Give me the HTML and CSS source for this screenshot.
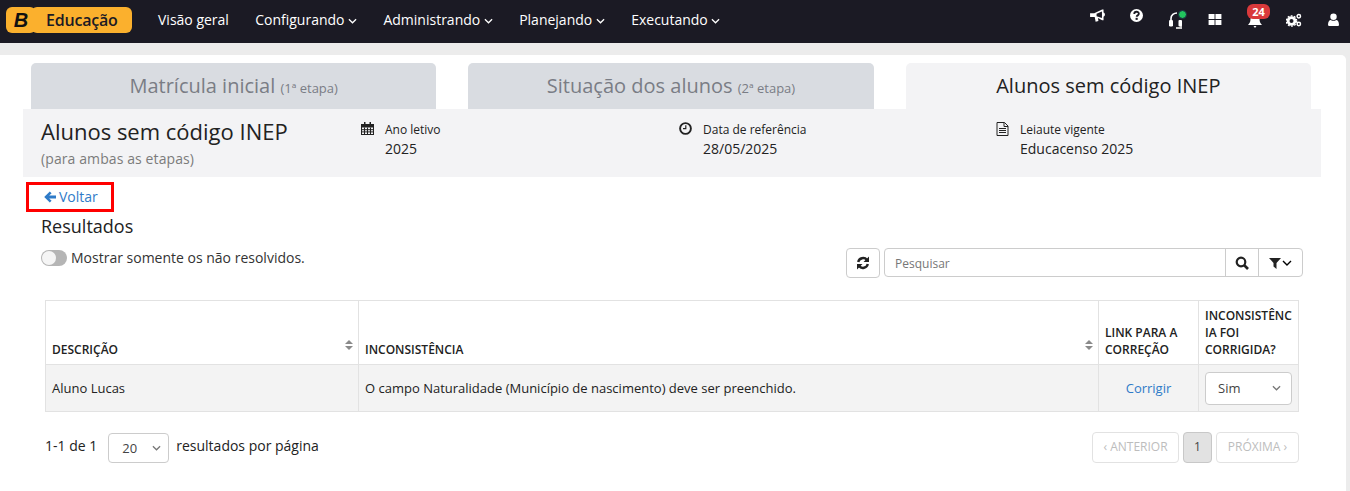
FILE: index.html
```html
<!DOCTYPE html>
<html lang="pt-BR">
<head>
    <meta charset="utf-8">
    <title>Alunos sem código INEP</title>
    <link rel="stylesheet" href="styles.css">
</head>
<body>
    <nav class="topbar">
        <div class="brand"><span class="brand-b">B</span><span class="brand-name">Educação</span></div>
        <ul class="menu">
            <li>Visão geral</li>
            <li>Configurando <svg class="caret" viewBox="0 0 10 6"><path d="M1 1l4 4 4-4"/></svg></li>
            <li>Administrando <svg class="caret" viewBox="0 0 10 6"><path d="M1 1l4 4 4-4"/></svg></li>
            <li>Planejando <svg class="caret" viewBox="0 0 10 6"><path d="M1 1l4 4 4-4"/></svg></li>
            <li>Executando <svg class="caret" viewBox="0 0 10 6"><path d="M1 1l4 4 4-4"/></svg></li>
        </ul>
        <div class="tools">
            <span class="tool tool-news"><svg viewBox="0 0 16 14" width="15" height="13"><path fill="#fff" d="M0 4.500h4.500L13 .5h1.500v3.200c.9.300 1.500 1.100 1.500 2.300s-.6 2-1.500 2.300V12H13L8.500 9.800 9 13l-3 .8-1-5.300H0z"/><path fill="#1b1a24" d="M12.800 2.700v7L7 7.800V5z"/></svg></span>
            <span class="tool tool-question"><svg viewBox="0 0 14 14" width="13" height="13"><circle cx="7" cy="7" r="7" fill="#fff"/><path d="M4.600 5.400c0-3.200 4.900-3.200 4.900-.3 0 1.800-2.300 1.700-2.300 3.300" fill="none" stroke="#1b1a24" stroke-width="2"/><rect x="6" y="9.500" width="2.300" height="2.200" fill="#1b1a24"/></svg></span>
            <span class="tool tool-help"><svg viewBox="0 0 15 17" width="15" height="17"><path d="M2 9V6.500C2 3 5 1 8 1" fill="none" stroke="#fff" stroke-width="1.600"/><rect x="0" y="8" width="4" height="6.500" rx="1.200" fill="#fff"/><rect x="9.500" y="8" width="3.500" height="6.500" rx="1" fill="#fff"/><path d="M12 14v2H7" fill="none" stroke="#ccc" stroke-width="2"/></svg><span class="online"></span></span>
            <span class="tool tool-grid"><svg viewBox="0 0 14 12" width="14" height="11"><path fill="#fff" d="M0 0h6.500v5.500H0zM7.500 0H14v5.500H7.500zM0 6.500h6.500V12H0zM7.500 6.500H14V12H7.500z"/></svg></span>
            <span class="tool tool-bell"><svg viewBox="0 0 14 14" width="14" height="14"><path fill="#fff" d="M7 0c3 0 4.500 2 4.500 5 0 3 1 4.500 2.500 6H0c1.500-1.500 2.500-3 2.500-6C2.500 2 4 0 7 0zM5.500 12h3L7 14z"/></svg><span class="badge">24</span></span>
            <span class="tool tool-cogs"><svg viewBox="0 0 16 14" width="16" height="14"><circle cx="5.500" cy="8" r="3.400" fill="none" stroke="#fff" stroke-width="2.800"/><circle cx="5.500" cy="8" r="5.200" fill="none" stroke="#fff" stroke-width="1.300" stroke-dasharray="1.800 1.500"/><circle cx="12.800" cy="3.300" r="1.700" fill="none" stroke="#fff" stroke-width="1.500"/><circle cx="12.800" cy="11" r="1.700" fill="none" stroke="#fff" stroke-width="1.500"/></svg></span>
            <span class="tool tool-user"><svg viewBox="0 0 12 14" width="11" height="13"><circle cx="6" cy="4" r="3.500" fill="#fff"/><path fill="#fff" d="M0 13c0-4 1.500-5.500 3-5.500 1.800 1.300 4.200 1.300 6 0 1.500 0 3 1.500 3 5.500 0 .6-.5 1-1 1H1c-.5 0-1-.4-1-1z"/></svg></span>
        </div>
    </nav>

    <main class="page">
        <div class="tabs">
            <div class="tab">Matrícula inicial <small>(1ª etapa)</small></div>
            <div class="tab">Situação dos alunos <small>(2ª etapa)</small></div>
            <div class="tab tab-active">Alunos sem código INEP</div>
        </div>

        <section class="summary">
            <div class="summary-title">
                <h1>Alunos sem código INEP</h1>
                <p>(para ambas as etapas)</p>
            </div>
            <div class="info">
                <svg class="info-icon" viewBox="0 0 13 13" width="13" height="13"><path fill="#222" d="M0 2h3V0h1.500v2h4V0H10v2h3v11H0zm1 3.500V12h11V5.500z"/><path stroke="#222" d="M3.500 5.500V12M6.500 5.500V12M9.500 5.500V12M1 7.700h11M1 9.900h11"/></svg>
                <div><span class="info-label">Ano letivo</span><span class="info-value">2025</span></div>
            </div>
            <div class="info">
                <svg class="info-icon" viewBox="0 0 13 13" width="13" height="13"><circle cx="6.500" cy="6.500" r="5.400" fill="none" stroke="#222" stroke-width="1.900"/><path d="M6.800 3.200v3.500H4" fill="none" stroke="#222" stroke-width="1.200"/></svg>
                <div><span class="info-label">Data de referência</span><span class="info-value">28/05/2025</span></div>
            </div>
            <div class="info">
                <svg class="info-icon" viewBox="0 0 13 14" width="13" height="14"><path fill="none" stroke="#222" d="M1 .5h7.500L12 4v9.500H1zM8 .5V4.500h4"/><path stroke="#222" d="M3 6.500h7M3 8.500h7M3 10.500h7"/></svg>
                <div><span class="info-label">Leiaute vigente</span><span class="info-value">Educacenso 2025</span></div>
            </div>
        </section>

        <a class="back" href="#"><svg viewBox="0 0 12 12" width="12" height="12"><path fill="#2f7bc8" d="M5.800.4l1.800 1.800L5.200 4.500H12v3H5.200l2.400 2.300-1.800 1.800L.2 6z"/></svg>Voltar</a>

        <div class="content">
            <h2>Resultados</h2>
            <div class="toolbar">
                <label class="only-open"><span class="switch"><span class="knob"></span></span>Mostrar somente os não resolvidos.</label>
                <div class="search-group">
                    <button class="btn btn-refresh"><svg viewBox="0 0 14 14" width="14" height="14"><path fill="none" stroke="#222" stroke-width="2.400" d="M2.200 6A5 5 0 0 1 11 4M11.800 8A5 5 0 0 1 3 10"/><path fill="#222" d="M13 .5v5.500H7.500zM1 13.500V8h5.500z"/></svg></button>
                    <div class="search">
                        <input type="text" placeholder="Pesquisar">
                        <button class="btn-search"><svg viewBox="0 0 14 14" width="14" height="14"><circle cx="6" cy="6" r="4.300" fill="none" stroke="#222" stroke-width="2.200"/><path d="M9 9l4 4" stroke="#222" stroke-width="2.600"/></svg></button>
                        <button class="btn-filter"><svg viewBox="0 0 12 12" width="12" height="12"><path fill="#222" d="M0 1h12L7.500 6v6l-3-2.500V6z"/></svg><svg class="filter-caret" viewBox="0 0 10 6"><path d="M1 1l4 4 4-4"/></svg></button>
                    </div>
                </div>
            </div>

            <table class="results">
                <colgroup><col class="col-desc"><col class="col-inc"><col class="col-link"><col class="col-fix"></colgroup>
                <thead>
                    <tr>
                        <th class="sortable">DESCRIÇÃO<span class="sort"></span></th>
                        <th class="sortable">INCONSISTÊNCIA<span class="sort"></span></th>
                        <th>LINK PARA A CORREÇÃO</th>
                        <th>INCONSISTÊNCIA FOI CORRIGIDA?</th>
                    </tr>
                </thead>
                <tbody>
                    <tr>
                        <td>Aluno Lucas</td>
                        <td>O campo Naturalidade (Município de nascimento) deve ser preenchido.</td>
                        <td class="cell-link"><a href="#">Corrigir</a></td>
                        <td class="cell-select"><div class="select">Sim<svg class="select-caret" viewBox="0 0 10 6"><path d="M1 1l4 4 4-4"/></svg></div></td>
                    </tr>
                </tbody>
            </table>

            <div class="pager">
                <div class="pager-info">
                    <span>1-1 de 1</span>
                    <div class="select select-size">20<svg class="select-caret" viewBox="0 0 10 6"><path d="M1 1l4 4 4-4"/></svg></div>
                    <span>resultados por página</span>
                </div>
                <div class="pager-links">
                    <span class="page-btn page-prev">‹ ANTERIOR</span>
                    <span class="page-btn page-current">1</span>
                    <span class="page-btn page-next">PRÓXIMA ›</span>
                </div>
            </div>
        </div>
    </main>
</body>
</html>
```
FILE: styles.css
```css
body{
    margin: 0;
    height: 491px;
    overflow: hidden;
    background-color: #ececec;
    font-family: "Open Sans", "Noto Sans", sans-serif;
    font-size: 13px;
    color: #222;
}
a{
    color: #2f7bc8;
    text-decoration: none;
}

/* top bar */
.topbar{
    height: 43px;
    display: flex;
    align-items: center;
    background-color: #1b1a24;
    color: #fff;
}
.brand{
    display: flex;
    margin-left: 6px;
    height: 26px;
    margin-top: -3px;
    width: 126px;
}
.brand-b{
    width: 30px;
    background-color: #fbb02d;
    border-radius: 6px;
    font: italic bold 20px/26px "Liberation Sans", sans-serif;
    text-align: center;
    color: #111;
}
.brand-name{
    flex-grow: 1;
    margin-left: -5px;
    background-color: #fbb02d;
    border-radius: 6px;
    font-size: 16px;
    line-height: 26px;
    font-weight: 600;
    letter-spacing: -0.2px;
    color: #1b1a24;
    padding-left: 15px;
}
.menu{
    display: flex;
    gap: 26.300px;
    list-style: none;
    margin: -5px 0 0 26px;
    padding: 0;
    font-size: 14px;
}
.caret{
    width: 9px;
    height: 6px;
    vertical-align: 1px;
}
.caret path,.select-caret path,.filter-caret path{
    fill: none;
    stroke: currentColor;
    stroke-width: 1.400;
}
.tools{
    margin-left: auto;
    display: flex;
    align-items: flex-start;
    height: 43px;
    margin-right: -3px;
}
.tool{
    position: relative;
    width: 39.300px;
    display: flex;
    justify-content: center;
}
.tool-news{
    margin-top: 9px;
}
.tool-question{
    margin-top: 9px;
}
.tool-help{
    margin-top: 12px;
}
.tool-grid{
    margin-top: 14px;
}
.tool-bell{
    margin-top: 14px;
}
.tool-cogs{
    margin-top: 13px;
}
.tool-user{
    margin-top: 13px;
}
.online{
    position: absolute;
    top: -2px;
    left: 21px;
    width: 7px;
    height: 7px;
    border-radius: 50%;
    background-color: #22c55e;
    border: 1px solid #1b2a40;
}
.badge{
    position: absolute;
    top: -10px;
    left: 12px;
    width: 23px;
    height: 15px;
    border-radius: 6px;
    background-color: #d9393b;
    font-size: 11px;
    font-weight: 700;
    line-height: 15px;
    text-align: center;
}

/* page */
.page{
    margin-top: 12px;
    margin-right: 4px;
    height: 436px;
    background-color: #fff;
    border-top-right-radius: 5px;
    padding: 8px 25px 0 23px;
}
.tabs{
    display: flex;
    gap: 32px;
    padding: 0 10px 0 8px;
}
.tab{
    flex: 1;
    height: 46px;
    border-radius: 5px 5px 0 0;
    background-color: #d9dce1;
    color: #7a7d85;
    font-size: 20px;
    line-height: 46px;
    text-align: center;
}
.tab small{
    font-size: 13px;
}
.tab-active{
    background-color: #f3f3f5;
    color: #222;
}
.summary{
    height: 68px;
    display: grid;
    grid-template-columns: 320px 318px 317px 1fr;
    background-color: #f3f3f5;
    padding-left: 18px;
    box-sizing: border-box;
}
.summary-title h1{
    margin: 7px 0 0;
    font-size: 22px;
    font-weight: 400;
    line-height: 30px;
}
.summary-title p{
    margin: 3px 0 0;
    font-size: 14px;
    line-height: 20px;
    letter-spacing: 0.1px;
    color: #7b7b7b;
}
.info{
    display: flex;
    gap: 11px;
    padding-top: 12px;
}
.info-icon{
    margin-top: 1px;
}
.info-label{
    display: block;
    font-size: 12px;
    line-height: 17px;
}
.info-value{
    display: block;
    font-size: 14px;
    line-height: 22px;
}
.back{
    display: block;
    box-sizing: border-box;
    width: 88px;
    height: 30px;
    margin: 5px 0 0 3px;
    border: 3px solid #f00;
    padding-left: 15px;
    font-size: 14px;
    line-height: 24px;
}
.back svg{
    vertical-align: -1px;
    margin-right: 3px;
}
.content{
    padding-left: 18px;
}
h2{
    margin: 2px 0 0;
    font-size: 18px;
    font-weight: 400;
    line-height: 24px;
}
.toolbar{
    display: flex;
    justify-content: space-between;
    align-items: flex-start;
    margin: 10px 18px 0 0;
}
.only-open{
    display: flex;
    align-items: center;
    font-size: 14px;
    line-height: 19px;
    color: #333;
}
.switch{
    position: relative;
    width: 26px;
    height: 16px;
    border-radius: 8px;
    background-color: #b5b5b5;
    margin-right: 4px;
}
.knob{
    position: absolute;
    top: 1px;
    left: 1px;
    width: 14px;
    height: 14px;
    border-radius: 50%;
    background-color: #f5f5f5;
}
.search-group{
    display: flex;
    gap: 4px;
}
button{
    background-color: #fff;
    padding: 0;
    display: flex;
    align-items: center;
    justify-content: center;
}
.btn-refresh{
    width: 34px;
    height: 30px;
    border: 1px solid #ccc;
    border-radius: 4px;
}
.search{
    display: flex;
    width: 419px;
    height: 29px;
    border: 1px solid #ccc;
    border-radius: 4px;
    box-sizing: border-box;
}
.search input{
    flex-grow: 1;
    min-width: 0;
    border: 0;
    padding: 2px 10px 0;
    background: none;
    border-radius: 4px;
    font: 12px "Open Sans", sans-serif;
}
.search input::placeholder{
    color: #777;
}
.btn-search,.btn-filter{
    border: 0;
    border-left: 1px solid #ccc;
    background: none;
}
.btn-search{
    width: 33px;
}
.btn-filter{
    width: 44px;
}
.filter-caret{
    width: 10px;
    height: 6px;
    margin-left: 1px;
}
.results{
    width: 1253px;
    margin: 22px 0 0 4px;
    border-collapse: collapse;
    table-layout: fixed;
}
.col-desc{
    width: 313px;
}
.col-inc{
    width: 740px;
}
.col-link{
    width: 100px;
}
.col-fix{
    width: 100px;
}
.results th,.results td{
    border: 1px solid #e2e2e2;
    padding: 0 6px;
}
.results th{
    position: relative;
    height: 57px;
    vertical-align: bottom;
    text-align: left;
    font-size: 12px;
    font-weight: 600;
    line-height: 17px;
    padding-bottom: 6px;
    overflow-wrap: break-word;
}
.sort{
    position: absolute;
    right: 5px;
    bottom: 11px;
    width: 0;
    height: 3px;
    border-left: 4px solid transparent;
    border-right: 4px solid transparent;
    border-top: 4px solid #8a8a8a;
}
.sort:before{
    content: "";
    position: absolute;
    left: -4px;
    top: -10px;
    border-left: 4px solid transparent;
    border-right: 4px solid transparent;
    border-bottom: 4px solid #8a8a8a;
}
.results td{
    height: 46px;
    background-color: #f3f3f3;
    font-size: 13px;
}
.cell-link{
    text-align: center;
}
.select{
    display: flex;
    align-items: center;
    justify-content: space-between;
    box-sizing: border-box;
    height: 33px;
    border: 1px solid #ccc;
    border-radius: 4px;
    background-color: #fff;
    padding: 0 10px 0 12px;
    font-size: 13px;
    color: #444;
}
.select-caret{
    width: 9px;
    height: 6px;
    color: #777;
}
.pager{
    display: flex;
    justify-content: space-between;
    margin: 20px 22px 0 4px;
}
.pager-info{
    display: flex;
    align-items: center;
    gap: 11px;
    height: 31px;
    font-size: 14px;
}
.pager-info span{
    padding-bottom: 4px;
}
.select-size{
    width: 61px;
    height: 30px;
    margin-right: -4px;
    padding: 1px 7px 0 13px;
}
.pager-links{
    display: flex;
    gap: 4px;
}
.page-btn{
    box-sizing: border-box;
    height: 31px;
    border: 1px solid #e2e2e2;
    border-radius: 4px;
    font-size: 12px;
    line-height: 27px;
    text-align: center;
    color: #bdbdbd;
}
.page-prev{
    width: 87px;
}
.page-current{
    width: 29px;
    background-color: #e2e2e2;
    border-color: #c8c8c8;
    color: #444;
}
.page-next{
    width: 83px;
}
```
